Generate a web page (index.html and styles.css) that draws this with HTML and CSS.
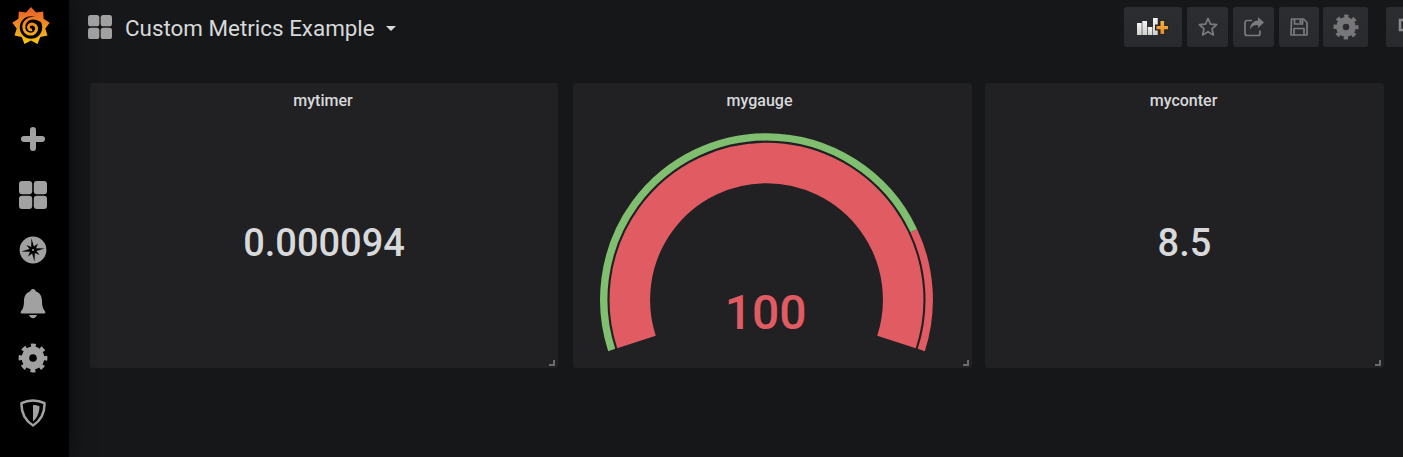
FILE: index.html
```html
<!DOCTYPE html>
<html lang="en">
<head>
<meta charset="utf-8">
<title>Custom Metrics Example</title>
<link rel="stylesheet" href="styles.css">
</head>
<body>
<svg class="defs" width="0" height="0" aria-hidden="true">
  <defs>
    <symbol id="gear" viewBox="-15 -15 30 30">
      <circle class="gear-ring" r="7.6"/>
      <circle class="gear-teeth" r="11.9"/>
    </symbol>
    <symbol id="grid" viewBox="0 0 28 28">
      <rect x="0" y="0" width="13.2" height="13.2" rx="3"/>
      <rect x="14.8" y="0" width="13.2" height="13.2" rx="3"/>
      <rect x="0" y="14.8" width="13.2" height="13.2" rx="3"/>
      <rect x="14.8" y="14.8" width="13.2" height="13.2" rx="3"/>
    </symbol>
    <linearGradient id="sunstroke" gradientUnits="userSpaceOnUse" x1="0" y1="-19" x2="0" y2="19">
      <stop offset="0" stop-color="#e8592f"/>
      <stop offset="1" stop-color="#fbca0a"/>
    </linearGradient>
    <linearGradient id="bars" x1="0" y1="0" x2="0" y2="1">
      <stop offset="0" stop-color="#f4f4f4"/>
      <stop offset="1" stop-color="#d0d0d0"/>
    </linearGradient>
    <linearGradient id="plus" x1="0" y1="0" x2="0" y2="1">
      <stop offset="0" stop-color="#f5b73d"/>
      <stop offset="1" stop-color="#e8882b"/>
    </linearGradient>
  </defs>
</svg>

<div class="app">
  <nav class="sidebar">
    <a class="logo">
      <svg width="40" height="40" viewBox="-20 -20 40 40">
        <polygon fill="url(#sunstroke)" points="0,-19 5,-13.6 12.2,-14.6 12.6,-7.3 18.7,-3.3 14.3,2.5 16.5,9.5 9.3,11.1 6.5,17.9 0,14.5 -6.5,17.9 -9.3,11.1 -16.5,9.5 -14.3,2.5 -18.7,-3.3 -12.6,-7.3 -12.2,-14.6 -5,-13.6"/>
        <circle cx="0" cy="1.5" r="11.2" fill="#000"/>
        <path class="logo-spiral" d="M1 3.6 C-1.8 4.6 -3.6 1.4 -2 -0.6 C0.2 -3.2 5.2 -1.8 5.6 2 C6 6.6 1 9.4 -3 7.6 C-8 5.4 -8.6 -1.4 -4.6 -5.2 C-1 -8.6 5 -8.4 9 -6 L13 -4"/>
      </svg>
    </a>
    <ul class="side-list">
      <li class="side-item">
        <svg width="24" height="24" viewBox="0 0 24 24" class="side-icon"><path d="M9 3a3 3 0 0 1 6 0V9h6a3 3 0 0 1 0 6H15v6a3 3 0 0 1-6 0V15H3a3 3 0 0 1 0-6H9z"/></svg>
      </li>
      <li class="side-item side-item-low">
        <svg width="28" height="28" class="side-icon"><use href="#grid"/></svg>
      </li>
      <li class="side-item side-item-low">
        <svg width="28" height="28" viewBox="-14 -14 28 28">
          <circle r="13.4" class="side-icon"/>
          <polygon fill="#000" points="-1.600,-11.800 0.900,-3.400 5,-6.600 3,-1.800 11.800,-1.600 3.400,0.900 6.600,5 1.800,3 1.600,11.800 -0.900,3.400 -5,6.600 -3,1.800 -11.800,1.600 -3.400,-0.900 -6.600,-5 -1.800,-3"/>
          <circle r="1" class="side-icon"/>
        </svg>
      </li>
      <li class="side-item side-item-low">
        <svg width="26" height="30" viewBox="0 0 26 30" class="side-icon"><path d="M13 0c1.500 0 2.500 1 2.700 2.200C20 3.600 22 7.500 22 12c0 5 1 8 3 10.300.8.900.3 2.200-.8 2.200H1.800c-1.100 0-1.600-1.300-.8-2.200C3 20 4 17 4 12c0-4.500 2-8.400 6.300-9.800C10.500 1 11.500 0 13 0z"/><path d="M9 26h8c-.6 1.800-2.200 3.200-4 3.200S9.600 27.800 9 26z"/></svg>
      </li>
      <li class="side-item">
        <svg width="30" height="30" class="side-icon"><use href="#gear"/></svg>
      </li>
      <li class="side-item">
        <svg width="26" height="28" viewBox="0 0 26 28">
          <path class="shield-line" d="M13 1.500C17 1.500 21 2.400 24.500 4.200 24.800 13.500 21 21.500 13 26.500 5 21.500 1.200 13.500 1.500 4.200 5 2.400 9 1.500 13 1.500z"/>
          <path class="side-icon" d="M13 6c2.300 0 4.500.4 6.500 1.200 0 6-2.200 11.600-6.500 15.300z"/>
        </svg>
      </li>
    </ul>
  </nav>

  <main class="main">
    <header class="topbar">
      <div class="dash-title">
        <svg width="24" height="24" viewBox="0 0 28 28" class="dash-icon"><use href="#grid"/></svg>
        <span class="dash-name">Custom Metrics Example</span>
        <span class="caret"></span>
      </div>
      <div class="toolbar">
        <button class="btn btn-add">
          <svg width="32" height="26" viewBox="0 0 32 26">
            <rect x="0" y="9" width="4.700" height="12" fill="url(#bars)"/>
            <rect x="5.300" y="7" width="4.700" height="14" fill="url(#bars)"/>
            <rect x="10.700" y="13" width="4.700" height="8" fill="url(#bars)"/>
            <rect x="16" y="4" width="4.700" height="17" fill="url(#bars)"/>
            <path fill="#26262a" d="M22 6h6.500v4.500H32v6h-3.500V21H22v-4.500h-4v-6h4z"/>
            <path fill="url(#plus)" d="M23.500 7h3.600v4.900H31v3.400h-3.900V20h-3.600v-4.700h-4v-3.400h4z"/>
          </svg>
        </button>
        <button class="btn btn-star">
          <svg width="20" height="20" viewBox="0 0 20 20"><path class="tool-line" d="M10 1.500l2.500 5.600 6.200.6-4.700 4.100 1.400 6.100L10 14.800l-5.400 3.100L6 11.800 1.300 7.700l6.200-.6z"/></svg>
        </button>
        <button class="btn btn-share">
          <svg width="20" height="20" viewBox="0 0 20 20">
            <path class="tool-line" d="M8 3.500H3a2 2 0 0 0-2 2v11a2 2 0 0 0 2 2h11a2 2 0 0 0 2-2v-3"/>
            <path class="tool-fill" d="M14 0l6 5.500-6 5.500V8c-4 0-6.500 1.200-8 5 0-6 3-9 8-9.500z"/>
          </svg>
        </button>
        <button class="btn btn-save">
          <svg width="18" height="18" viewBox="0 0 18 18">
            <path class="tool-line" d="M1.500 1h12L17 4.500V17H1z"/>
            <path class="tool-line" d="M4.500 1v5h8V1M4 17v-6.500h10V17"/>
            <rect class="tool-fill" x="9.500" y="2" width="2" height="3"/>
          </svg>
        </button>
        <button class="btn btn-gear">
          <svg width="26" height="26" class="tool-gear"><use href="#gear"/></svg>
        </button>
        <button class="btn btn-cycle">
          <svg width="18" height="18" viewBox="0 0 18 18"><path class="tool-screen" d="M2 2h14v10H2zM6 15.500h6"/></svg>
        </button>
      </div>
    </header>

    <section class="panels">
      <article class="panel panel-timer">
        <h2 class="panel-title">mytimer</h2>
        <div class="panel-body"><span class="stat">0.000094</span></div>
        <i class="resize"></i>
      </article>
      <article class="panel panel-gauge">
        <h2 class="panel-title panel-title-gauge">mygauge</h2>
        <div class="panel-body">
          <svg class="gauge" width="399" height="250" viewBox="573 118 399 250">
            <path class="arc-green" d="M611.700 350A162.800 162.800 0 0 1 766.500 136.900A162.800 162.800 0 0 1 913.800 230.700"/>
            <path class="arc-red-thin" d="M913.800 230.700A162.800 162.800 0 0 1 921.300 350"/>
            <path class="arc-red-wide" d="M636.500 341.900A136.700 136.700 0 0 1 766.500 163A136.700 136.700 0 0 1 896.500 341.900"/>
            <text class="gauge-value" x="765.700" y="328.500">100</text>
          </svg>
        </div>
        <i class="resize"></i>
      </article>
      <article class="panel panel-counter">
        <h2 class="panel-title">myconter</h2>
        <div class="panel-body"><span class="stat">8.5</span></div>
        <i class="resize"></i>
      </article>
    </section>
  </main>
</div>
</body>
</html>
```

FILE: styles.css
```css
* { box-sizing: border-box; }

html, body {
  margin: 0;
  height: 100%;
  overflow: hidden;
  background: #161719;
  font-family: Roboto, "Helvetica Neue", sans-serif;
  color: #d8d9da;
}

.defs { position: absolute; }

.gear-ring { fill: none; stroke: currentColor; stroke-width: 7.6; }
.gear-teeth { fill: none; stroke: currentColor; stroke-width: 5; stroke-dasharray: 4.7 4.646; stroke-dashoffset: 2.35; }

.app { display: flex; height: 457px; }

/* Sidebar */
.sidebar {
  width: 69px;
  flex: none;
  background: #000;
  box-shadow: 0 0 20px rgba(0, 0, 0, .6);
  position: relative;
  z-index: 2;
  color: #a1a1a1;
}

.logo {
  display: flex;
  justify-content: center;
  height: 112px;
  padding: 6px 7px 0 0;
}

.side-list { list-style: none; margin: 0; padding: 0; }

.side-item {
  height: 54.700px;
  display: flex;
  align-items: center;
  justify-content: center;
  padding-right: 3px;
}

.side-item-low { padding-top: 2px; }

.side-icon { fill: #a1a1a1; }

.logo-spiral {
  fill: none;
  stroke: url(#sunstroke);
  stroke-width: 2.800;
  stroke-linecap: butt;
}

.shield-line {
  fill: none;
  stroke: #a1a1a1;
  stroke-width: 2.500;
  stroke-linejoin: round;
}

/* Top bar */
.main { flex: 1; min-width: 0; }

.topbar {
  height: 83px;
  padding: 7px 0 0 19px;
  display: flex;
  justify-content: space-between;
  align-items: flex-start;
}

.dash-title {
  display: flex;
  align-items: center;
  height: 40px;
  color: #d8d9da;
}

.dash-icon { fill: #a1a1a1; margin-right: 13px; }

.dash-name { font-size: 22.400px; line-height: 40px; padding-top: 2px; }

.caret {
  margin: 3px 0 0 11px;
  border: 5px solid transparent;
  border-top-color: #d8d9da;
  border-bottom-width: 0;
}

.toolbar { display: flex; gap: 5px; margin-right: -24px; flex: none; }

.btn {
  height: 40px;
  padding: 0;
  flex: none;
  display: flex;
  align-items: center;
  justify-content: center;
  background: linear-gradient(180deg, #2c2d30, #292a2d);
  border: 0;
  border-radius: 3px;
  color: #7b7b7e;
}

.btn-add { width: 58px; }
.btn-star { width: 41px; }
.btn-share { width: 41px; }
.btn-save { width: 40px; }
.btn-gear { width: 45px; margin-left: -1px; }
.btn-cycle { width: 41px; margin-left: 13px; }

.tool-line { fill: none; stroke: #7b7b7e; stroke-width: 1.700; stroke-linejoin: round; }
.tool-fill { fill: #7b7b7e; }
.tool-gear { color: #77777a; }
.tool-screen { fill: none; stroke: #8a8a8d; stroke-width: 2.500; }

/* Panels */
.panels {
  display: flex;
  gap: 15px;
  padding-left: 21px;
}

.panel {
  position: relative;
  height: 285px;
  flex: none;
  display: flex;
  flex-direction: column;
  background: #212124;
  border-radius: 3px;
}

.panel-timer { width: 468px; }
.panel-gauge { width: 399px; }
.panel-counter { width: 399px; margin-left: -2px; }

.panel-title {
  margin: 0;
  height: 35px;
  padding-right: 2px;
  font-size: 16px;
  font-weight: 500;
  line-height: 35px;
  text-align: center;
  color: #d8d9da;
}

.panel-title-gauge { padding-right: 26px; }

.panel-body {
  flex: 1;
  display: flex;
  align-items: center;
  justify-content: center;
}

.stat { font-size: 38px; font-weight: 500; color: #d8d9da; }

.gauge { display: block; }

.arc-green { fill: none; stroke: #81bf70; stroke-width: 7.400; }
.arc-red-thin { fill: none; stroke: #e05c62; stroke-width: 7.400; }
.arc-red-wide { fill: none; stroke: #e05c62; stroke-width: 40.500; }

.gauge-value {
  font-family: Roboto, sans-serif;
  font-size: 48px;
  font-weight: 500;
  fill: #e05c62;
  text-anchor: middle;
}

.resize {
  position: absolute;
  right: 3px;
  bottom: 2px;
  width: 6px;
  height: 6px;
  border-right: 2px solid #6b6b6e;
  border-bottom: 2px solid #6b6b6e;
}
```
